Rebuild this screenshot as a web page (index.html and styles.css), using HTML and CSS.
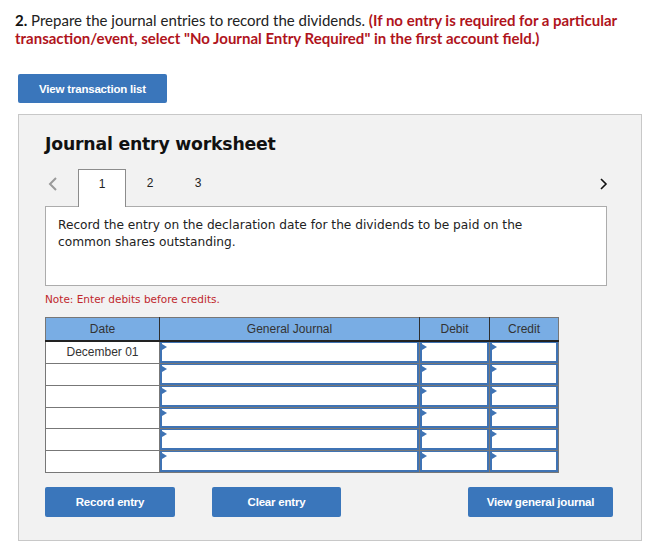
FILE: index.html
```html
<!DOCTYPE html>
<html>
<head>
<meta charset="utf-8">
<link rel="stylesheet" href="styles.css">
</head>
<body>
<p class="prompt"><b class="num">2.</b> Prepare the journal entries to record the dividends. <b class="req">(If no entry is required for a particular transaction/event, select "No Journal Entry Required" in the first account field.)</b></p>
<div class="top-actions"><button class="btn btn-list">View transaction list</button></div>
<section class="panel">
  <h2 class="title">Journal entry worksheet</h2>
  <div class="tabs">
    <span class="arrow prev"><svg width="10" height="16" viewBox="0 0 10 16"><polyline points="8,2 2,8 8,14" fill="none" stroke="#9a9a9a" stroke-width="2"/></svg></span>
    <span class="tab active">1</span>
    <span class="tab">2</span>
    <span class="tab">3</span>
    <span class="spacer"></span>
    <span class="arrow next"><svg width="10" height="14" viewBox="0 0 10 14"><polyline points="2,2 7,7 2,12" fill="none" stroke="#111" stroke-width="1.6"/></svg></span>
  </div>
  <div class="desc">Record the entry on the declaration date for the dividends to be paid on the common shares outstanding.</div>
  <p class="note">Note: Enter debits before credits.</p>
  <table class="journal">
    <thead>
      <tr><th class="c-date">Date</th><th class="c-acct">General Journal</th><th class="c-amt">Debit</th><th class="c-amt2">Credit</th></tr>
    </thead>
    <tbody>
      <tr class="r1"><td class="date">December 01</td><td class="in"><div class="field"></div></td><td class="in"><div class="field"></div></td><td class="in"><div class="field"></div></td></tr>
      <tr class="r2"><td class="date"></td><td class="in"><div class="field"></div></td><td class="in"><div class="field"></div></td><td class="in"><div class="field"></div></td></tr>
      <tr class="r2"><td class="date"></td><td class="in"><div class="field"></div></td><td class="in"><div class="field"></div></td><td class="in"><div class="field"></div></td></tr>
      <tr class="r1"><td class="date"></td><td class="in"><div class="field"></div></td><td class="in"><div class="field"></div></td><td class="in"><div class="field"></div></td></tr>
      <tr class="r2"><td class="date"></td><td class="in"><div class="field"></div></td><td class="in"><div class="field"></div></td><td class="in"><div class="field"></div></td></tr>
      <tr class="r2"><td class="date"></td><td class="in"><div class="field"></div></td><td class="in"><div class="field"></div></td><td class="in"><div class="field"></div></td></tr>
    </tbody>
  </table>
  <div class="actions">
    <button class="btn btn-record">Record entry</button>
    <button class="btn btn-clear">Clear entry</button>
    <span class="spacer"></span>
    <button class="btn btn-view">View general journal</button>
  </div>
</section>
</body>
</html>
```
FILE: styles.css
```css
html, body { margin: 0; padding: 0; background: #fff; }
body { padding: 11px 0 0 0; width: 659px; }

.prompt {
  margin: 0 0 0 15px;
  width: 630px;
  font-family: Lato, "Liberation Sans", sans-serif;
  font-size: 15px;
  line-height: 18px;
  color: #222;
}
.prompt .num { font-weight: 700; color: #111; }
.prompt .req { color: #b0141c; font-weight: 700; }

.top-actions { margin: 27px 0 0 18px; height: 29px; }

.btn {
  border: none;
  border-radius: 2px;
  background: #3a76bb;
  color: #fff;
  font-family: "Liberation Sans", Arial, sans-serif;
  font-weight: 700;
  font-size: 11.5px;
  letter-spacing: -0.2px;
  padding: 0;
  cursor: pointer;
}
.btn-list { width: 149px; height: 29px; }

.panel {
  margin: 11px 0 0 18px;
  height: 425px;
  border: 1px solid #c8c8c8;
  background: #f2f2f2;
  padding: 0 34px 0 26px;
  box-sizing: content-box;
  width: 562px;
}

.title {
  margin: 0;
  padding-top: 19px;
  font-family: "DejaVu Sans", Verdana, sans-serif;
  font-weight: 700;
  font-size: 17.3px;
  line-height: 20px;
  color: #111;
  letter-spacing: -0.2px;
}

.tabs {
  display: flex;
  align-items: flex-start;
  margin-top: 15px;
  height: 37px;
  position: relative;
  z-index: 1;
}
.arrow { display: flex; }
.prev { width: 33px; padding-top: 7px; padding-left: 3px; box-sizing: border-box; }
.next { padding-top: 8px; margin-right: -2px; }
.spacer { flex: 1; }
.tab {
  width: 48px;
  height: 37px;
  box-sizing: border-box;
  text-align: center;
  font-family: "Liberation Sans", Arial, sans-serif;
  font-size: 12px;
  line-height: 16px;
  padding-top: 6px;
  color: #222;
}
.tab.active {
  background: #fff;
  border: 1px solid #8c8c8c;
  border-bottom: none;
  height: 38px;
}

.desc {
  background: #fff;
  border: 1px solid #acacac;
  box-sizing: content-box;
  padding: 10px 40px 0 12px;
  height: 68px;
  font-family: "DejaVu Sans", Verdana, sans-serif;
  font-size: 12.2px;
  line-height: 17px;
  color: #222;
}

.note {
  margin: 7px 0 0 0;
  font-family: "DejaVu Sans", Verdana, sans-serif;
  font-size: 10.5px;
  line-height: 12px;
  color: #c0282e;
}

.journal {
  margin-top: 12px;
  border-collapse: collapse;
  width: 514px;
  font-family: "Liberation Sans", Arial, sans-serif;
  font-size: 12px;
  color: #333;
  table-layout: fixed;
}
.journal th {
  background: #79ade4;
  font-weight: 400;
  height: 22px;
  padding: 0;
  border: 1px solid #2e2e2e;
  border-top-color: #777;
  border-bottom: 2px solid #222;
}
.journal th.c-date { border-left-color: #777; width: 113px; }
.journal th.c-acct { width: 259px; }
.journal th.c-amt { width: 69px; }
.journal th.c-amt2 { border-right-color: #777; }
.journal td {
  border: 1px solid #777;
  padding: 0;
  background: #fff;
}
.journal tr.r1 td { height: 20.5px; }
.journal tr.r2 td { height: 21px; }
.journal td.date { text-align: center; vertical-align: middle; }
.journal td.in { position: relative; }
.field {
  position: absolute;
  inset: 0;
  border: 2px solid #3f73b4;
  border-top-width: 1px;
  background: #fff;
}
.field::before {
  content: "";
  position: absolute;
  left: 0;
  top: 1px;
  border-left: 5px solid #3f73b4;
  border-top: 3px solid transparent;
  border-bottom: 3px solid transparent;
}

.actions {
  display: flex;
  margin-top: 14px;
}
.btn-record { width: 130px; height: 30px; }
.btn-clear { width: 129px; height: 30px; margin-left: 37px; }
.btn-view { width: 145px; height: 30px; margin-right: -6px; }
```
